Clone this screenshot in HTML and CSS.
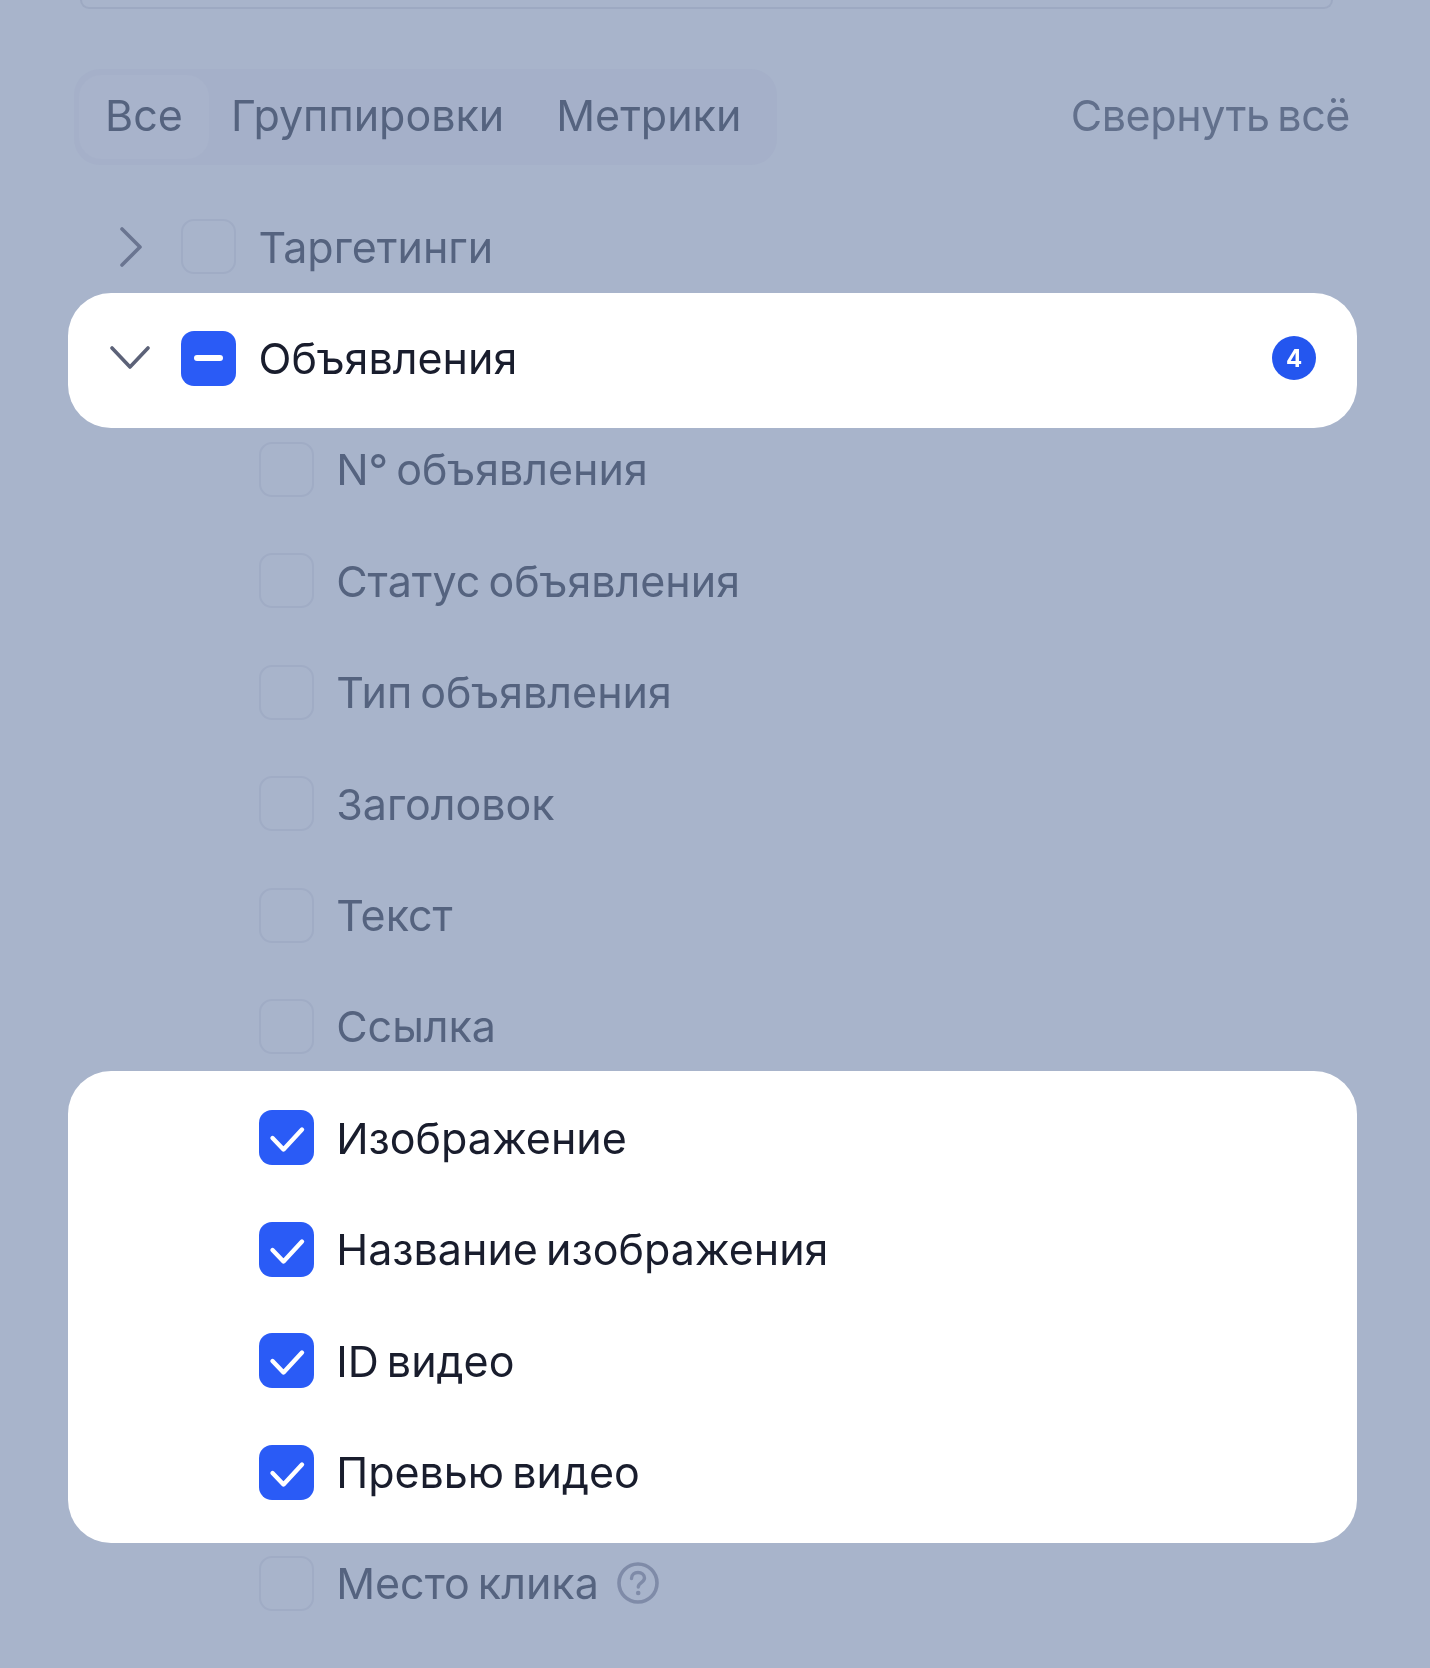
FILE: index.html
```html
<!DOCTYPE html>
<html lang="ru">
<head>
<meta charset="utf-8">
<title>Группировки и метрики</title>
<link rel="stylesheet" href="styles.css">
</head>
<body>
<svg class="defs" width="0" height="0" aria-hidden="true">
  <symbol id="check" viewBox="0 0 55 55"><path d="M13.5 28 24.5 39.5 43 19.5" fill="none" stroke="#fff" stroke-width="4.4" stroke-linecap="round" stroke-linejoin="round"/></symbol>
</svg>
<main class="page">
  <div class="search"></div>
  <div class="toolbar">
    <div class="tabs">
      <span class="tab tab-active">Все</span>
      <span class="tab tab-group">Группировки</span>
      <span class="tab tab-metric">Метрики</span>
    </div>
    <span class="collapse">Свернуть всё</span>
  </div>
  <div class="list">
    <div class="row parent">
      <svg class="chev" width="40" height="40" viewBox="0 0 40 40"><path d="M12 2 30 20 12 38" fill="none" stroke="#6a7591" stroke-width="3.6" stroke-linecap="round" stroke-linejoin="round"/></svg>
      <span class="box"></span><span class="label">Таргетинги</span>
    </div>
    <div class="row parent row-hl">
      <svg class="chev" width="40" height="40" viewBox="0 0 40 40"><path d="M2 10 20 29 38 10" fill="none" stroke="#5c6278" stroke-width="3.6" stroke-linecap="round" stroke-linejoin="round"/></svg>
      <span class="box box-on"><span class="minus"></span></span><span class="label on">Объявления</span>
      <span class="badge">4</span>
    </div>
    <div class="row child"><span class="box"></span><span class="label">N° объявления</span></div>
    <div class="row child"><span class="box"></span><span class="label">Статус объявления</span></div>
    <div class="row child"><span class="box"></span><span class="label">Тип объявления</span></div>
    <div class="row child"><span class="box"></span><span class="label">Заголовок</span></div>
    <div class="row child"><span class="box"></span><span class="label">Текст</span></div>
    <div class="row child"><span class="box"></span><span class="label">Ссылка</span></div>
    <div class="group-hl">
      <div class="row child"><span class="box box-on"><svg class="tick" width="55" height="55"><use href="#check"/></svg></span><span class="label on">Изображение</span></div>
      <div class="row child"><span class="box box-on"><svg class="tick" width="55" height="55"><use href="#check"/></svg></span><span class="label on">Название изображения</span></div>
      <div class="row child"><span class="box box-on"><svg class="tick" width="55" height="55"><use href="#check"/></svg></span><span class="label on">ID видео</span></div>
      <div class="row child"><span class="box box-on"><svg class="tick" width="55" height="55"><use href="#check"/></svg></span><span class="label on">Превью видео</span></div>
    </div>
    <div class="row child">
      <span class="box"></span><span class="label">Место клика</span>
      <svg class="help" width="42" height="42" viewBox="0 0 42 42"><circle cx="21" cy="21" r="19" fill="none" stroke="#7f8ba8" stroke-width="3.6"/><path d="M14.5 16.5c0-4 3-6 6.5-6s6.5 2.2 6.5 5.6c0 4.6-6.2 4.6-6.2 9" fill="none" stroke="#7f8ba8" stroke-width="3.4" stroke-linecap="round"/><circle cx="21.2" cy="31" r="2.3" fill="#7f8ba8"/></svg>
    </div>
  </div>
</main>
</body>
</html>
```

FILE: styles.css
```css
* { box-sizing: border-box; }
html, body { margin: 0; padding: 0; }
body {
  width: 1430px;
  height: 1668px;
  overflow: hidden;
  background: #a8b4cb;
  font-family: Inter, "Noto Sans", sans-serif;
  font-size: 43px;
  word-spacing: -4px;
  color: #55637f;
}
.defs { position: absolute; }
.page {
  height: 1668px;
  padding: 0 73px 0 68px;
  filter: blur(0.6px);
}
.search {
  height: 9px;
  margin: 0 24px 0 12px;
  border: 2px solid #9da9c2;
  border-top: 0;
  border-radius: 0 0 16px 16px;
}
.toolbar {
  display: flex;
  align-items: center;
  justify-content: space-between;
  margin-top: 60px;
  padding: 0 7px 0 6px;
}
.tabs {
  display: flex;
  align-items: center;
  width: 703px;
  height: 96px;
  padding-left: 5px;
  background: #a5b0c9;
  border-radius: 26px;
}
.tab {
  display: flex;
  align-items: center;
  padding-bottom: 4px;
}
.tab-active {
  width: 130px;
  height: 84px;
  padding-left: 26px;
  background: #a8b3cb;
  border-radius: 22px;
}
.tab-group { padding-left: 22px; padding-right: 26px; }
.tab-metric { padding-left: 26px; }
.collapse { color: #62708c; padding-bottom: 4px; letter-spacing: -0.4px; }
.list { margin-top: 26px; }
.row {
  display: flex;
  align-items: center;
  height: 111.4px;
}
.parent { padding-left: 42px; }
.child { padding-left: 190.6px; }
.chev { margin-right: 31px; flex: none; }
.box {
  display: flex;
  align-items: center;
  justify-content: center;
  flex: none;
  width: 55px;
  height: 55px;
  margin-right: 22.6px;
  border: 2px solid #a0acc5;
  border-radius: 13px;
}
.box-on {
  background: #2a5bf6;
  border: 0;
}
.tick { display: block; }
.minus {
  width: 29px;
  height: 6px;
  border-radius: 3px;
  background: #fff;
}
.label { white-space: nowrap; }
.on { color: #191d2d; }
.row-hl {
  height: 135px;
  padding-bottom: 5px;
  margin: -9px 0 -14.6px;
  background: #fff;
  border-radius: 43px;
  position: relative;
}
.badge {
  display: flex;
  align-items: center;
  justify-content: center;
  width: 44px;
  height: 44px;
  margin-left: auto;
  margin-right: 41px;
  border-radius: 50%;
  background: #2456ef;
  color: #fff;
  font-size: 24px;
  font-weight: 700;
}
.group-hl {
  padding: 11.3px 0 15px;
  margin: -11.3px 0 -15px;
  background: #fff;
  border-radius: 43px;
  position: relative;
}
.help { margin-left: 18px; flex: none; }
```
